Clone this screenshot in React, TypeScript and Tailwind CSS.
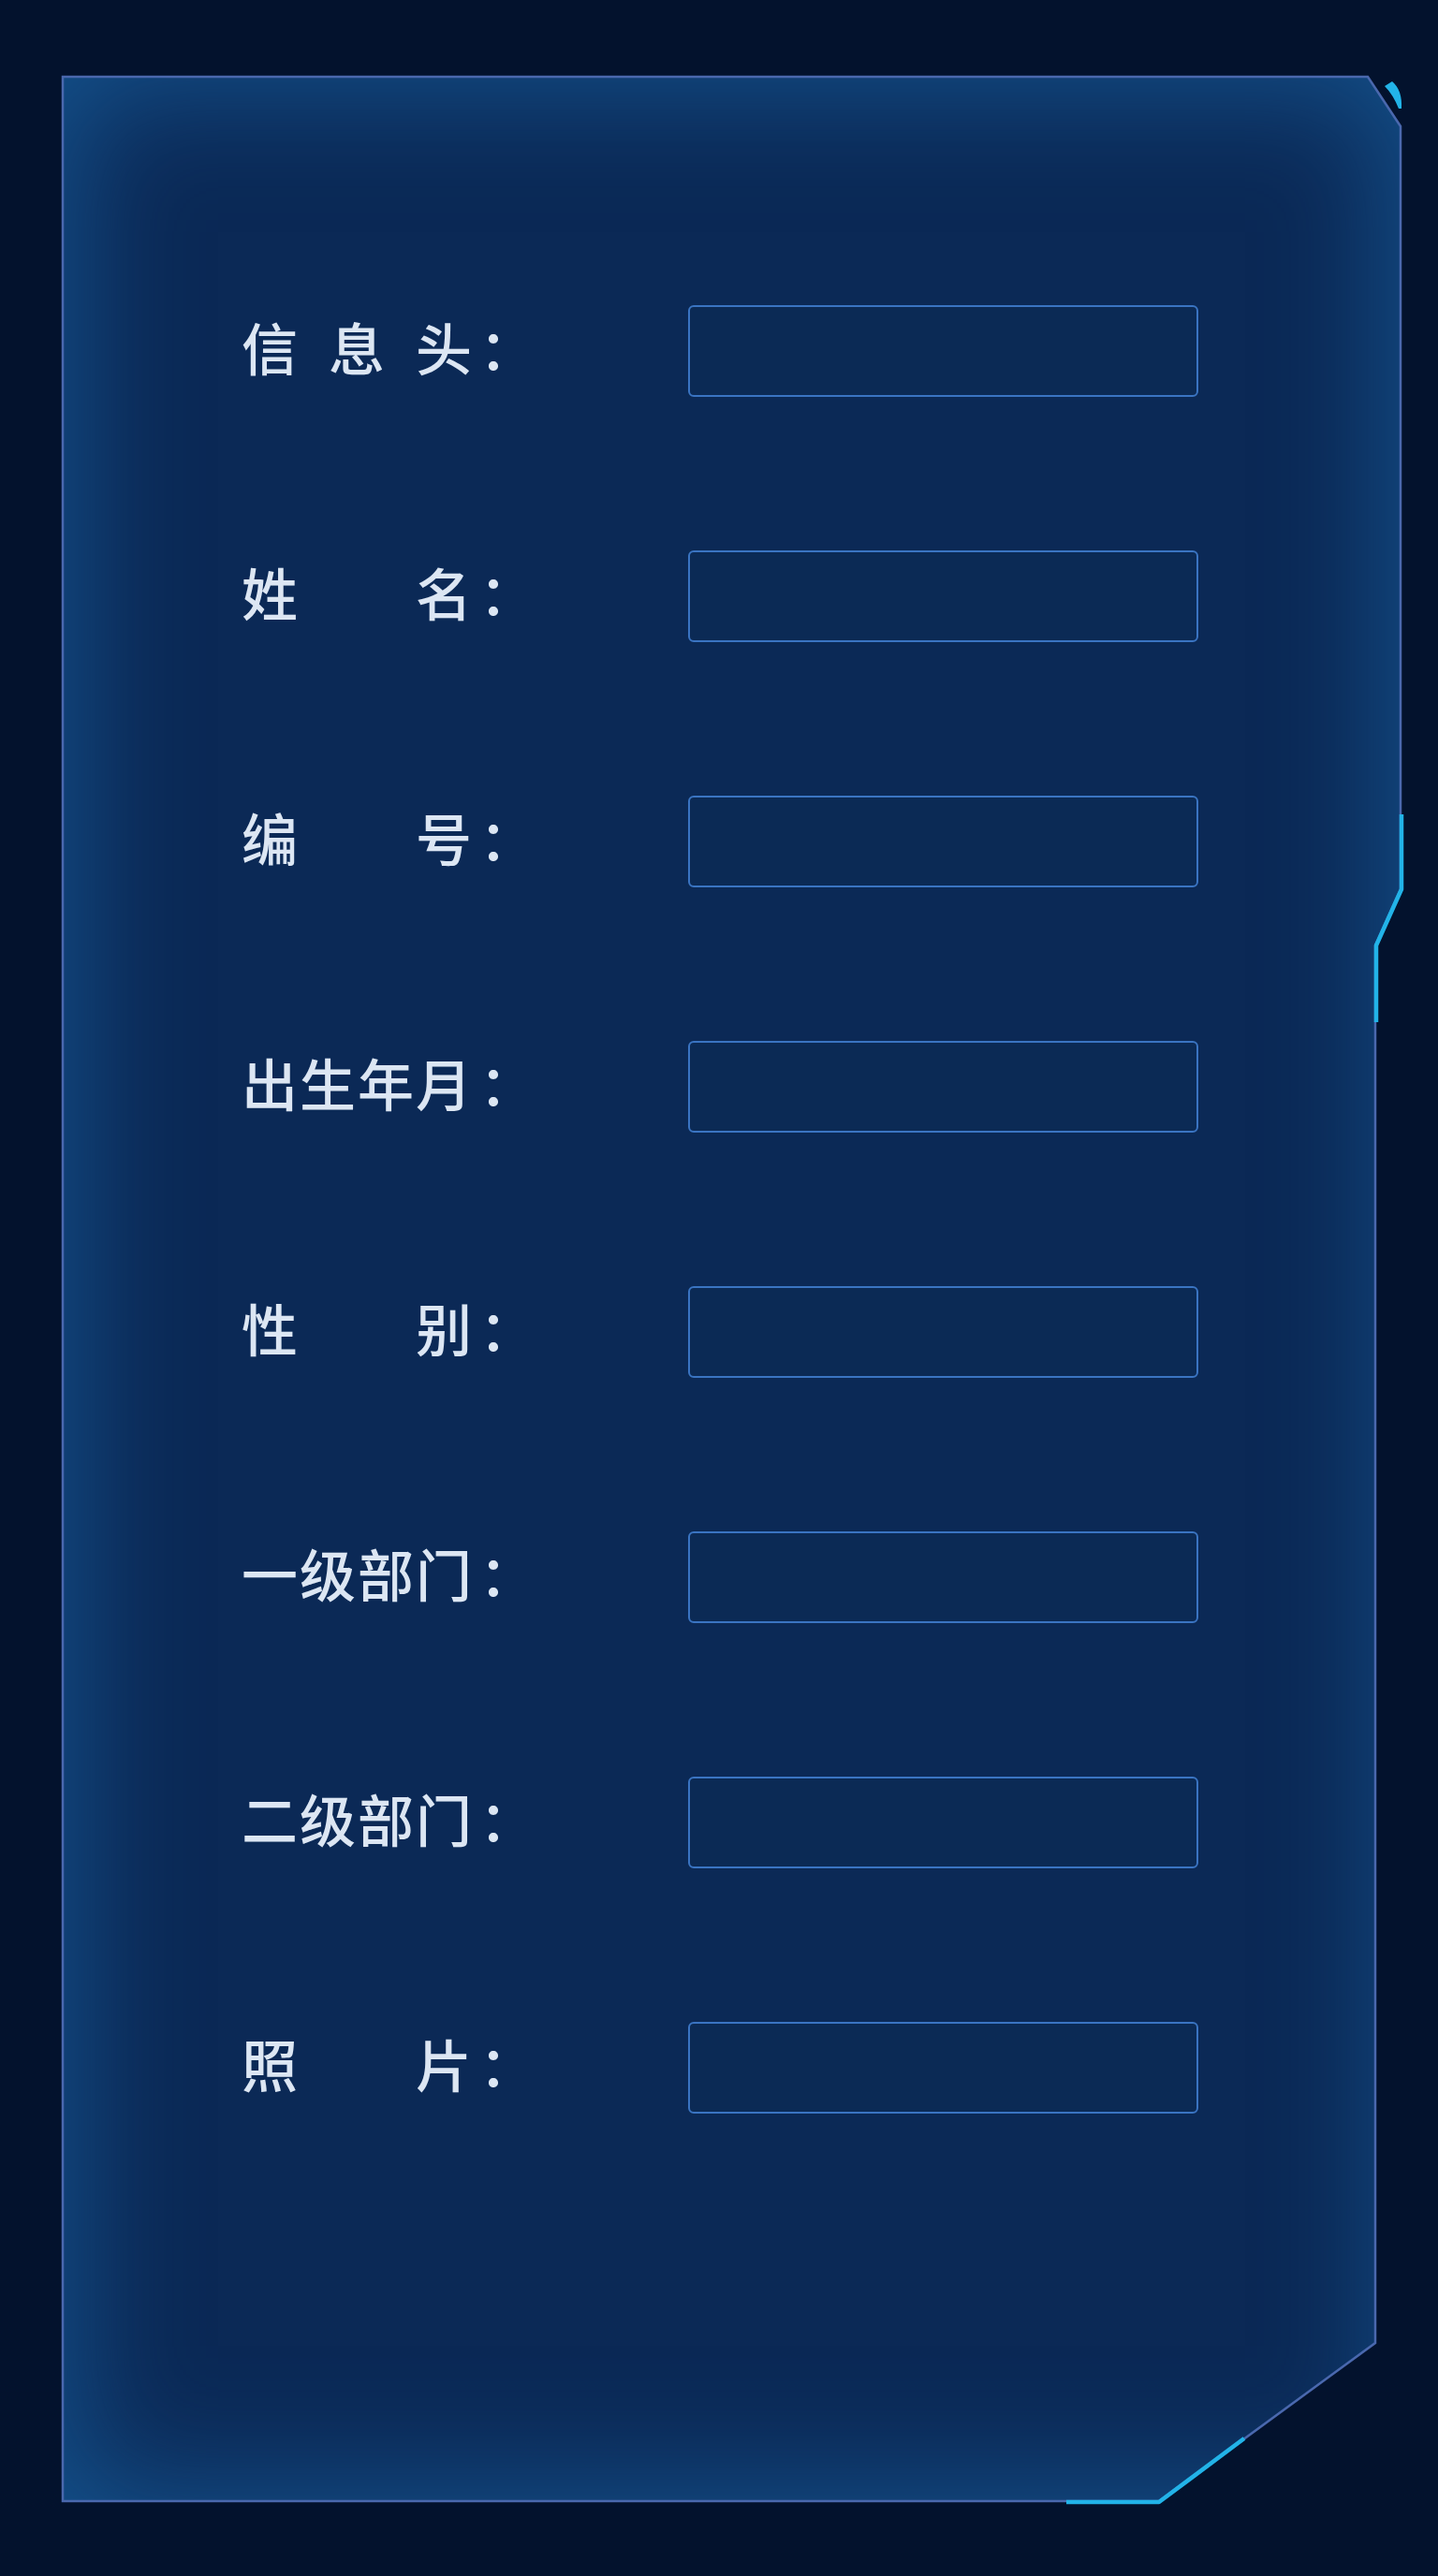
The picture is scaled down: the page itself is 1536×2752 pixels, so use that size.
import React from "react";

const fields: string[][] = [
  ["信", "息", "头"],
  ["姓", "名"],
  ["编", "号"],
  ["出", "生", "年", "月"],
  ["性", "别"],
  ["一", "级", "部", "门"],
  ["二", "级", "部", "门"],
  ["照", "片"],
];

const outline =
  "0,0 1394,0 1429,53 1429,868 1402,928 1402,2421 1171,2590 0,2590";

function Label({ chars }: { chars: string[] }) {
  return (
    <div className="flex w-[477px] items-center">
      <div className="flex w-[246px] justify-between">
        {chars.map((c, i) => (
          <span key={i}>{c}</span>
        ))}
      </div>
      <span className="ml-[8px]">：</span>
    </div>
  );
}

export default function App() {
  return (
    <div
      className="min-h-[2752px] w-full bg-[#03122d] pt-[82px] pl-[67px]"
      style={{ fontFamily: '"Noto Sans CJK SC", "Noto Sans", sans-serif' }}
    >
      <div className="relative h-[2590px] w-[1429px]">
        <div
          className="h-full w-full bg-[#0b2956] shadow-[inset_0_0_130px_10px_rgba(26,106,172,0.65)]"
          style={{ clipPath: `polygon(${outline.split(" ").map((p) => p.replace(",", "px ") + "px").join(", ")})` }}
        >
          <div className="flex flex-col gap-[164px] pt-[244px] pl-[191px]">
            {fields.map((f, i) => (
              <div key={i} className="flex items-center text-[60px] font-medium leading-none text-[#dce6f3]">
                <div className="-mt-[10px]">
                  <Label chars={f} />
                </div>
                <input
                  type="text"
                  className="h-[98px] w-[545px] rounded-md border-2 border-[#3a74c2] bg-[#0b2a55] outline-none"
                />
              </div>
            ))}
          </div>
        </div>

        {/* frame lines */}
        <svg
          className="pointer-events-none absolute inset-0 overflow-visible"
          width="1429"
          height="2590"
          viewBox="0 0 1429 2590"
        >
          <polygon points={outline} fill="none" stroke="#4a68ae" strokeWidth="2.5" />
          <path d="M1412 10 L1420 5 Q1431 14 1430 34 L1427 34 Q1421 19 1412 10 Z" fill="#22b3e8" />
          <polyline
            points="1430,788 1430,868 1403,928 1403,1010"
            fill="none"
            stroke="#22b3e8"
            strokeWidth="4.5"
            strokeLinejoin="round"
          />
          <polyline
            points="1262,2523 1171,2591 1072,2591"
            fill="none"
            stroke="#22b3e8"
            strokeWidth="4.5"
            strokeLinejoin="round"
          />
        </svg>
      </div>
    </div>
  );
}
